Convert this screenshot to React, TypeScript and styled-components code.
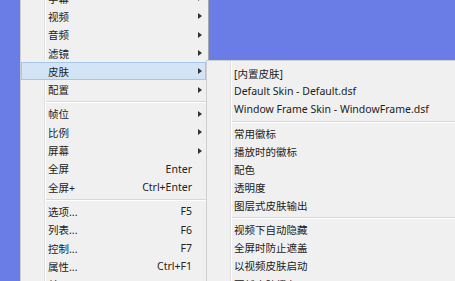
import React from "react";
import styled, { createGlobalStyle } from "styled-components";

const GlobalStyle = createGlobalStyle`
  html, body {
    margin: 0;
    padding: 0;
    background: #6a7de6;
    overflow: hidden;
  }
`;

type Entry =
  | { kind: "item"; label: string; shortcut?: string; sub?: boolean; active?: boolean }
  | { kind: "sep" };

const mainItems: Entry[] = [
  { kind: "item", label: "字幕", sub: true },
  { kind: "item", label: "视频", sub: true },
  { kind: "item", label: "音频", sub: true },
  { kind: "item", label: "滤镜", sub: true },
  { kind: "item", label: "皮肤", sub: true, active: true },
  { kind: "item", label: "配置", sub: true },
  { kind: "sep" },
  { kind: "item", label: "帧位", sub: true },
  { kind: "item", label: "比例", sub: true },
  { kind: "item", label: "屏幕", sub: true },
  { kind: "item", label: "全屏", shortcut: "Enter" },
  { kind: "item", label: "全屏+", shortcut: "Ctrl+Enter" },
  { kind: "sep" },
  { kind: "item", label: "选项...", shortcut: "F5" },
  { kind: "item", label: "列表...", shortcut: "F6" },
  { kind: "item", label: "控制...", shortcut: "F7" },
  { kind: "item", label: "属性...", shortcut: "Ctrl+F1" },
  { kind: "item", label: "关于...", shortcut: "F1" },
];

const skinItems: Entry[] = [
  { kind: "item", label: "[内置皮肤]" },
  { kind: "item", label: "Default Skin - Default.dsf" },
  { kind: "item", label: "Window Frame Skin - WindowFrame.dsf" },
  { kind: "sep" },
  { kind: "item", label: "常用徽标" },
  { kind: "item", label: "播放时的徽标" },
  { kind: "item", label: "配色" },
  { kind: "item", label: "透明度" },
  { kind: "item", label: "图层式皮肤输出" },
  { kind: "sep" },
  { kind: "item", label: "视频下自动隐藏" },
  { kind: "item", label: "全屏时防止遮盖" },
  { kind: "item", label: "以视频皮肤启动" },
  { kind: "item", label: "更新皮肤缓存" },
];

export default function App() {
  return (
    <>
      <GlobalStyle />
      <Page>
        <Menu $top={-15} $width={189}>
          {mainItems.map((e, i) =>
            e.kind === "sep" ? (
              <Separator key={i} />
            ) : (
              <Item key={i} $active={e.active} $h={18.3}>
                <Label>{e.label}</Label>
                {e.shortcut && <Shortcut>{e.shortcut}</Shortcut>}
                <ArrowCell>{e.sub && <Arrow />}</ArrowCell>
              </Item>
            )
          )}
        </Menu>
        <SubMenu $top={60} $width={270}>
          {skinItems.map((e, i) =>
            e.kind === "sep" ? (
              <Separator key={i} />
            ) : (
              <Item key={i} $h={18.1}>
                <Label>{e.label}</Label>
              </Item>
            )
          )}
        </SubMenu>
      </Page>
    </>
  );
}

const Page = styled.div`
  width: 455px;
  height: 281px;
  overflow: hidden;
  display: flex;
  align-items: flex-start;
  padding-left: 20px;
  box-sizing: border-box;
  font-family: "Noto Sans", "Noto Sans CJK SC", sans-serif;
  font-size: 10.5px;
  color: #222222;
`;

const Menu = styled.div<{ $top: number; $width: number }>`
  flex: none;
  width: ${(p) => p.$width}px;
  margin-top: ${(p) => p.$top}px;
  box-sizing: border-box;
  padding: 3px 2px 3px 0;
  background-color: #f0f0f0;
  background-image: linear-gradient(
    to right,
    transparent 23px,
    #e0e0e0 23px,
    #e0e0e0 24px,
    #ffffff 24px,
    #ffffff 25px,
    transparent 25px
  );
  border: 1px solid #cdcdcd;
  border-right-color: #a8a8a8;
`;

const SubMenu = styled(Menu)`
  margin-left: -3px;
  padding-right: 0;
  border-right: none;
  border-color: #cfcfcf;
`;

const Item = styled.div<{ $active?: boolean; $h: number }>`
  display: flex;
  align-items: center;
  height: ${(p) => p.$h}px;
  box-sizing: border-box;
  padding-left: 27px;
  white-space: nowrap;
  border: 1px solid ${(p) => (p.$active ? "#a4c6ea" : "transparent")};
  background: ${(p) => (p.$active ? "#d2e4f6" : "transparent")};
`;

const Label = styled.span`
  flex: 1;
  margin-left: -1px;
`;

const Shortcut = styled.span`
  flex: none;
`;

const ArrowCell = styled.span`
  flex: none;
  width: 13px;
  display: flex;
  align-items: center;
  padding-left: 6px;
  box-sizing: border-box;
`;

const Arrow = styled.span`
  width: 0;
  height: 0;
  border-top: 3.5px solid transparent;
  border-bottom: 3.5px solid transparent;
  border-left: 4px solid #333;
`;

const Separator = styled.div`
  height: 6px;
  display: flex;
  align-items: center;
  padding-left: 25px;
  &::after {
    content: "";
    flex: 1;
    height: 1px;
    background: #d7d7d7;
    box-shadow: 0 1px 0 #ffffff;
  }
`;
